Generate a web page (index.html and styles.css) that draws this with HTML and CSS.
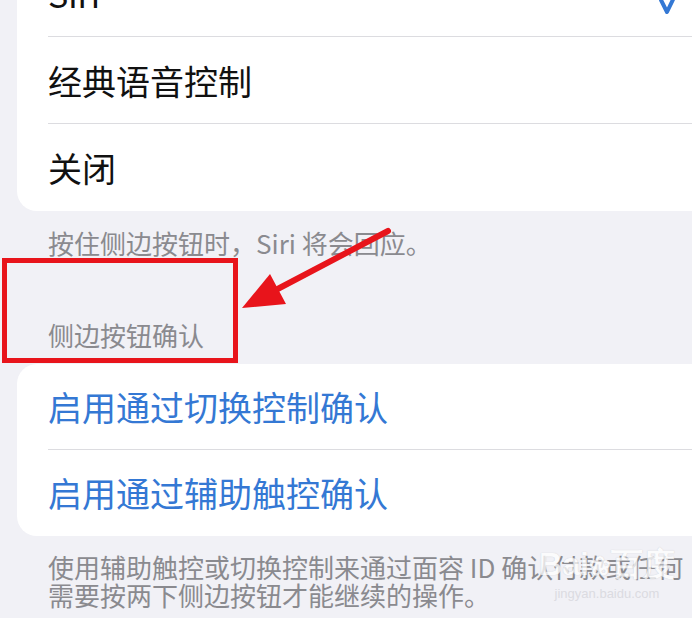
FILE: index.html
```html
<!DOCTYPE html>
<html>
	<head>
		<meta charset="utf-8" />
		<title>侧边按钮</title>
		<link rel="stylesheet" href="styles.css">
	</head>
	<body>
		<div class="page">
			<div class="group group-top">
				<div class="row">
					<span>Siri</span>
					<svg class="check" width="24" height="36" viewBox="0 0 24 36">
						<path d="M2 21 L8 33 L21 6" fill="none" stroke="#3478d4" stroke-width="4" stroke-linecap="round" stroke-linejoin="round"/>
					</svg>
				</div>
				<div class="row">经典语音控制</div>
				<div class="row">关闭</div>
			</div>
			<p class="note note-first">按住侧边按钮时，Siri 将会回应。</p>
			<p class="section-title">侧边按钮确认</p>
			<div class="group group-confirm">
				<div class="row link">启用通过切换控制确认</div>
				<div class="row link">启用通过辅助触控确认</div>
			</div>
			<p class="note note-last">使用辅助触控或切换控制来通过面容 ID 确认付款或任何<br>需要按两下侧边按钮才能继续的操作。</p>

			<!-- 标注 -->
			<div class="mark"></div>
			<svg class="arrow" width="692" height="618" viewBox="0 0 692 618">
				<line x1="388" y1="231" x2="270" y2="293" stroke="#e8141b" stroke-width="6" stroke-linecap="round"/>
				<polygon points="242,308 270,274 286,304" fill="#e8141b"/>
			</svg>
			<div class="watermark">
				<div class="wm-logo">Bai<span class="paw">&#x2740;</span>百度</div>
				<div class="wm-site">jingyan.baidu.com</div>
			</div>
		</div>
	</body>
</html>
```

FILE: styles.css
```css
		body
		{
			margin: 0;
			background: #f1f1f6;
			font-family: "Noto Sans CJK SC", "Noto Sans", sans-serif;
			overflow: hidden;
		}
		.page
		{
			position: relative;
			height: 618px;
			overflow: hidden;
		}
		.group
		{
			background: #ffffff;
			margin-left: 17px;
			margin-right: -30px;
			padding-left: 31px;
			border-radius: 20px;
		}
		.group-top
		{
			margin-top: -50px;
		}
		.group-confirm
		{
			margin-top: 15px;
		}
		.row
		{
			height: 87px;
			display: flex;
			align-items: center;
			justify-content: space-between;
			padding-right: 39px;
			border-bottom: 1px solid #dcdce0;
			box-sizing: border-box;
			font-size: 34px;
			color: #111111;
		}
		.row:last-child
		{
			border-bottom: none;
		}
		.group-confirm .row
		{
			height: 86px;
		}
		.link
		{
			color: #3478d4;
		}
		.check
		{
			display: block;
			margin-top: 8px;
		}
		.note
		{
			margin: 0;
			padding-left: 48px;
			font-size: 26px;
			line-height: 28.5px;
			color: #8a8a8f;
			white-space: nowrap;
		}
		.note-first
		{
			margin-top: 18px;
		}
		.note-last
		{
			margin-top: 17px;
		}
		.section-title
		{
			margin: 62px 0 0 0;
			padding-left: 48px;
			font-size: 26px;
			line-height: 29px;
			color: #8a8a8f;
		}
		.mark
		{
			position: absolute;
			left: 2px;
			top: 258px;
			width: 236px;
			height: 105px;
			border: 5px solid #e8141b;
			box-sizing: border-box;
		}
		.arrow
		{
			position: absolute;
			left: 0;
			top: 0;
			pointer-events: none;
		}
		.watermark
		{
			position: absolute;
			left: 532px;
			top: 546px;
			width: 150px;
			text-align: center;
			opacity: 0.75;
		}
		.wm-logo
		{
			font-family: "Liberation Sans", sans-serif;
			font-weight: bold;
			font-size: 32px;
			line-height: 36px;
			color: #ffffff;
			text-shadow: 0 0 1px #b8b8c0;
		}
		.paw
		{
			font-size: 26px;
		}
		.wm-site
		{
			font-family: "Liberation Sans", sans-serif;
			font-size: 13px;
			color: #d4d4da;
			margin-top: 2px;
		}
```
